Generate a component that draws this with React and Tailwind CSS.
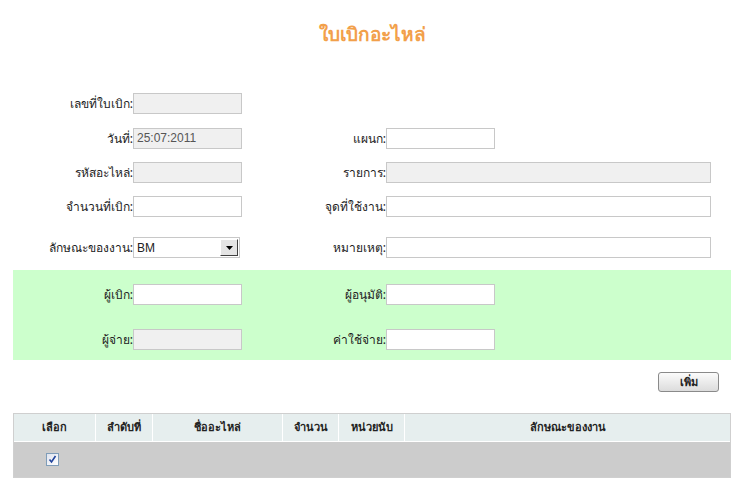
import React from "react";

const inputBase =
  "h-[21px] border border-[#c8c8c8] text-[12px] px-[3px] leading-[19px] text-[#555]";

function Field({ w = "w-[109px]", grey = false, value = "" }) {
  return (
    <div
      className={`${inputBase} ${w} ${grey ? "bg-[#f0f0f0]" : "bg-white"}`}
      style={{ fontFamily: '"Liberation Sans", Arial, sans-serif' }}
    >
      {value}
    </div>
  );
}

function Label({ w, children }) {
  return <div className={`${w} text-right text-[12px] text-[#222] shrink-0`}>{children}</div>;
}

function Row({ children, cls = "" }) {
  return <div className={`flex items-center h-[21px] ${cls}`}>{children}</div>;
}

export default function App() {
  return (
    <div
      className="w-[745px] h-[487px] bg-white overflow-hidden"
      style={{ fontFamily: '"Noto Sans", "DejaVu Sans", "Liberation Sans", sans-serif' }}
    >
      <div className="pt-[20px] h-[93px] text-center text-[19px] font-bold text-[#f2a04a]">
        ใบเบิกอะไหล่
      </div>

      <Row>
        <Label w="w-[133px]">เลขที่ใบเบิก:</Label>
        <Field grey />
      </Row>
      <Row cls="mt-[14px]">
        <Label w="w-[133px]">วันที่:</Label>
        <Field grey value="25:07:2011" />
        <Label w="w-[144px]">แผนก:</Label>
        <Field />
      </Row>
      <Row cls="mt-[13px]">
        <Label w="w-[133px]">รหัสอะไหล่:</Label>
        <Field grey />
        <Label w="w-[144px]">รายการ:</Label>
        <Field grey w="w-[325px]" />
      </Row>
      <Row cls="mt-[13px]">
        <Label w="w-[133px]">จำนวนที่เบิก:</Label>
        <Field />
        <Label w="w-[144px]">จุดที่ใช้งาน:</Label>
        <Field w="w-[325px]" />
      </Row>
      <Row cls="mt-[20px]">
        <Label w="w-[133px]">ลักษณะของงาน:</Label>
        <div className="w-[107px] h-[21px] border border-[#c8c8c8] bg-white flex items-center">
          <span
            className="flex-1 text-[12px] px-[3px] text-[#222]"
            style={{ fontFamily: '"Liberation Sans", Arial, sans-serif' }}
          >
            BM
          </span>
          <div className="w-[18px] h-[17px] mr-[1px] bg-[#e4e4e4] border-t border-l border-white border-r border-b border-r-[#404040] border-b-[#404040] flex items-center justify-center">
            <svg width="7" height="4" viewBox="0 0 7 4">
              <path d="M0 0H7L3.5 4Z" fill="#000" />
            </svg>
          </div>
        </div>
        <Label w="w-[146px]">หมายเหตุ:</Label>
        <Field w="w-[325px]" />
      </Row>

      <div className="mt-[12px] mx-[13px] w-[718px] h-[90px] bg-[#ccffcc] pt-[14px]">
        <Row>
          <Label w="w-[120px]">ผู้เบิก:</Label>
          <Field />
          <Label w="w-[144px]">ผู้อนุมัติ:</Label>
          <Field />
        </Row>
        <Row cls="mt-[24px]">
          <Label w="w-[120px]">ผู้จ่าย:</Label>
          <Field grey />
          <Label w="w-[144px]">ค่าใช้จ่าย:</Label>
          <Field />
        </Row>
      </div>

      <div className="flex justify-end pr-[26px] mt-[12px]">
        <button className="w-[61px] h-[20px] rounded-[3px] border border-[#8a8a8a] bg-gradient-to-b from-[#fbfbfb] to-[#dcdcdc] text-[11px] font-bold text-[#222] leading-[18px]">
          เพิ่ม
        </button>
      </div>

      <div className="mt-[21px] mx-[13px] w-[718px] border border-[#cfcfcf]">
        <div className="flex h-[27px] bg-[#e6eeee] text-[11px] font-bold text-[#222]">
          <div className="w-[82px] border-r border-white flex items-center justify-center">เลือก</div>
          <div className="w-[57px] border-r border-white flex items-center justify-center">ลำดับที่</div>
          <div className="w-[130px] border-r border-white flex items-center justify-center">ชื่ออะไหล่</div>
          <div className="w-[56px] border-r border-white flex items-center justify-center">จำนวน</div>
          <div className="w-[66px] border-r border-white flex items-center justify-center">หน่วยนับ</div>
          <div className="flex-1 flex items-center justify-center">ลักษณะของงาน</div>
        </div>
        <div className="flex h-[36px] bg-[#cccccc] border-t border-white">
          <div className="w-[76px] flex items-center justify-center">
            <div className="w-[13px] h-[13px] border border-[#7f9db9] bg-gradient-to-br from-[#dfe3ee] to-white flex items-center justify-center">
              <svg width="9" height="9" viewBox="0 0 9 9">
                <path d="M1.5 4.5L3.5 7L7.5 1" stroke="#21449c" strokeWidth="1.6" fill="none" />
              </svg>
            </div>
          </div>
        </div>
      </div>
    </div>
  );
}
